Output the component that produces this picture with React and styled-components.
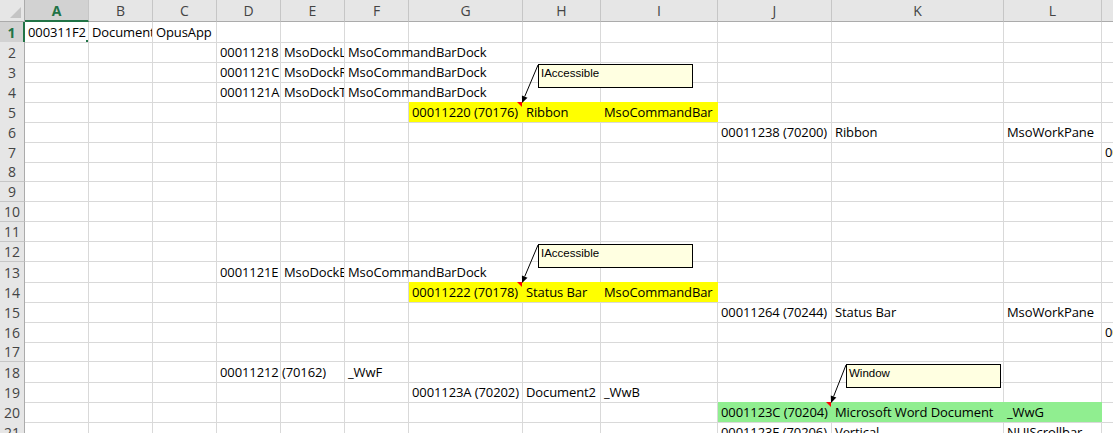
import React from "react";
import styled, { createGlobalStyle, css } from "styled-components";

const GlobalStyle = createGlobalStyle`
	html, body {
		margin: 0;
		padding: 0;
		background: #ffffff;
		overflow: hidden;
	}
	body {
		font-family: "Open Sans", "Liberation Sans", sans-serif;
	}
`;

const GREEN = "#217346";
const GRID = "#d9d9d9";

const columns = [
	{ key: "A", width: 64 },
	{ key: "B", width: 64 },
	{ key: "C", width: 64 },
	{ key: "D", width: 64 },
	{ key: "E", width: 64 },
	{ key: "F", width: 64 },
	{ key: "G", width: 114 },
	{ key: "H", width: 78 },
	{ key: "I", width: 117 },
	{ key: "J", width: 114 },
	{ key: "K", width: 172 },
	{ key: "L", width: 98 },
	{ key: "M", width: 98 },
];

const template = `25px ${columns.map((c) => `${c.width}px`).join(" ")}`;

const YELLOW = "#ffff00";
const LIME = "#90ee90";

const data = {
	1: { A: { text: "000311F2" }, B: { text: "Document2 - Word" }, C: { text: "OpusApp" } },
	2: { D: { text: "00011218 (70168)" }, E: { text: "MsoDockLeft" }, F: { text: "MsoCommandBarDock" } },
	3: { D: { text: "0001121C (70172)" }, E: { text: "MsoDockRight" }, F: { text: "MsoCommandBarDock" } },
	4: { D: { text: "0001121A (70170)" }, E: { text: "MsoDockTop" }, F: { text: "MsoCommandBarDock" } },
	5: {
		G: { text: "00011220 (70176)", fill: YELLOW, note: true },
		H: { text: "Ribbon", fill: YELLOW },
		I: { text: "MsoCommandBar", fill: YELLOW },
	},
	6: { J: { text: "00011238 (70200)" }, K: { text: "Ribbon" }, L: { text: "MsoWorkPane" } },
	7: { M: { text: "00011240 (70208)" } },
	13: { D: { text: "0001121E (70174)" }, E: { text: "MsoDockBottom" }, F: { text: "MsoCommandBarDock" } },
	14: {
		G: { text: "00011222 (70178)", fill: YELLOW, note: true },
		H: { text: "Status Bar", fill: YELLOW },
		I: { text: "MsoCommandBar", fill: YELLOW },
	},
	15: { J: { text: "00011264 (70244)" }, K: { text: "Status Bar" }, L: { text: "MsoWorkPane" } },
	16: { M: { text: "00011266 (70246)" } },
	18: { D: { text: "00011212 (70162)" }, F: { text: "_WwF" } },
	19: { G: { text: "0001123A (70202)" }, H: { text: "Document2" }, I: { text: "_WwB" } },
	20: {
		J: { text: "0001123C (70204)", fill: LIME, note: true },
		K: { text: "Microsoft Word Document", fill: LIME },
		L: { text: "_WwG", fill: LIME },
	},
	21: { J: { text: "0001123E (70206)" }, K: { text: "Vertical" }, L: { text: "NUIScrollbar" } },
};

const comments = [
	{ text: "IAccessible", left: 538, top: 64, from: [538, 65], to: [522, 103] },
	{ text: "IAccessible", left: 538, top: 244, from: [538, 245], to: [522, 283] },
	{ text: "Window", left: 846, top: 364, from: [846, 365], to: [831, 403] },
];

const Page = styled.div`
	position: relative;
	width: 1113px;
	height: 433px;
	overflow: hidden;
`;

const Sheet = styled.div`
	display: flex;
	flex-direction: column;
	width: max-content;
`;

const Row = styled.div`
	display: grid;
	grid-template-columns: ${template};
	height: ${(p) => (p.$header ? 22 : 20)}px;
`;

const Corner = styled.div`
	position: relative;
	background: #e6e6e6;
	border-right: 1px solid #ababab;
	border-bottom: 1px solid #ababab;

	&::after {
		content: "";
		position: absolute;
		right: 3px;
		bottom: 3px;
		border-style: solid;
		border-width: 0 0 11px 11px;
		border-color: transparent transparent #c4c4c4 transparent;
	}
`;

const ColHead = styled.div`
	display: flex;
	align-items: center;
	justify-content: center;
	box-sizing: border-box;
	background: ${(p) => (p.$active ? "#d2d2d2" : "#e6e6e6")};
	border-right: 1px solid #c6c6c6;
	border-bottom: ${(p) => (p.$active ? `2px solid ${GREEN}` : "1px solid #ababab")};
	color: ${(p) => (p.$active ? GREEN : "#444444")};
	font-weight: ${(p) => (p.$active ? 700 : 400)};
	font-size: 14px;
	padding-top: ${(p) => (p.$active ? 1 : 0)}px;
`;

const RowHead = styled.div`
	display: flex;
	align-items: center;
	justify-content: center;
	box-sizing: border-box;
	background: ${(p) => (p.$active ? "#d2d2d2" : "#e6e6e6")};
	border-right: ${(p) => (p.$active ? `2px solid ${GREEN}` : "1px solid #ababab")};
	border-bottom: 1px solid #c6c6c6;
	color: ${(p) => (p.$active ? GREEN : "#444444")};
	font-weight: ${(p) => (p.$active ? 700 : 400)};
	font-size: 14px;
`;

const Cell = styled.div`
	position: relative;
	box-sizing: border-box;
	padding: 0 0 0 3px;
	background: ${(p) => p.$fill || "transparent"};
	border-right: 1px solid ${(p) => p.$fill || GRID};
	border-bottom: 1px solid ${GRID};
	color: #000000;
	font-size: 13px;
	letter-spacing: -0.1px;
	line-height: 20px;
	white-space: nowrap;
	overflow: ${(p) => (p.$clip ? "hidden" : "visible")};

	${(p) =>
		p.$note &&
		css`
			&::after {
				content: "";
				position: absolute;
				top: 0;
				right: 0;
				border-style: solid;
				border-width: 0 5px 5px 0;
				border-color: transparent #ff0000 transparent transparent;
			}
		`}

	${(p) =>
		p.$active &&
		css`
			&::before {
				content: "";
				position: absolute;
				left: -2px;
				top: -2px;
				right: -2px;
				bottom: -2px;
				border: 2px solid ${GREEN};
				pointer-events: none;
			}
		`}
`;

const Handle = styled.span`
	position: absolute;
	right: -4px;
	bottom: -4px;
	width: 5px;
	height: 5px;
	background: ${GREEN};
	border: 1px solid #ffffff;
	z-index: 2;
`;

const Note = styled.div`
	position: absolute;
	left: ${(p) => p.$left}px;
	top: ${(p) => p.$top}px;
	box-sizing: border-box;
	width: 155px;
	height: 24px;
	padding: 1px 0 0 2px;
	background: #ffffe1;
	border: 1px solid #000000;
	font-family: "Liberation Sans", Arial, sans-serif;
	font-size: 11.5px;
	line-height: 15px;
	color: #000000;
`;

const Arrows = styled.svg`
	position: absolute;
	left: 0;
	top: 0;
	pointer-events: none;
`;

const Arrow = ({ from, to }) => {
	const dx = to[0] - from[0];
	const dy = to[1] - from[1];
	const len = Math.hypot(dx, dy);
	const ux = dx / len;
	const uy = dy / len;
	const baseX = to[0] - ux * 7;
	const baseY = to[1] - uy * 7;
	const px = -uy * 3;
	const py = ux * 3;
	return (
		<g>
			<line x1={from[0]} y1={from[1]} x2={baseX} y2={baseY} stroke="#000" strokeWidth="1" />
			<polygon
				points={`${to[0]},${to[1]} ${baseX + px},${baseY + py} ${baseX - px},${baseY - py}`}
				fill="#000"
			/>
		</g>
	);
};

const ROWS = Array.from({ length: 21 }, (_, i) => i + 1);

export default function App() {
	return (
		<Page>
			<GlobalStyle />
			<Sheet>
				<Row $header>
					<Corner />
					{columns.map((c) => (
						<ColHead key={c.key} $active={c.key === "A"}>
							{c.key}
						</ColHead>
					))}
				</Row>
				{ROWS.map((r) => {
					const row = data[r] || {};
					return (
						<Row key={r}>
							<RowHead $active={r === 1}>{r}</RowHead>
							{columns.map((c, i) => {
								const cell = row[c.key];
								const next = columns[i + 1] && row[columns[i + 1].key];
								const active = r === 1 && c.key === "A";
								return (
									<Cell
										key={c.key}
										$fill={cell && cell.fill}
										$note={cell && cell.note}
										$clip={cell && next && next.text}
										$active={active}
									>
										{cell && cell.text}
										{active && <Handle />}
									</Cell>
								);
							})}
						</Row>
					);
				})}
			</Sheet>
			<Arrows width="1113" height="433">
				{comments.map((n, i) => (
					<Arrow key={i} from={n.from} to={n.to} />
				))}
			</Arrows>
			{comments.map((n, i) => (
				<Note key={i} $left={n.left} $top={n.top}>
					{n.text}
				</Note>
			))}
		</Page>
	);
}
